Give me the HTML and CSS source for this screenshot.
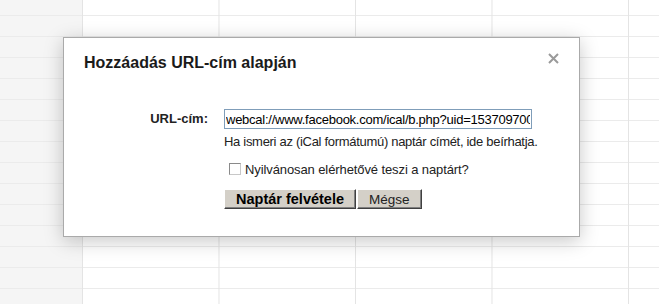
FILE: index.html
```html
<!DOCTYPE html>
<html lang="hu">

<head>
    <meta charset="UTF-8">
    <title>Hozzáadás URL-cím alapján</title>
    <link rel="stylesheet" href="styles.css">
</head>

<body>
    <div class="calendar"></div>

    <div class="dialog">
        <button class="close" title="Bezárás">
            <svg width="11" height="11" viewBox="0 0 11 11">
                <path d="M1 1L10 10M10 1L1 10" stroke="#9a9a9a" stroke-width="2" />
            </svg>
        </button>
        <h1 class="title">Hozzáadás URL-cím alapján</h1>

        <div class="form">
            <label class="label" for="url">URL-cím:</label>
            <div class="field">
                <input id="url" class="url-input" type="text"
                    value="webcal://www.facebook.com/ical/b.php?uid=153709700000&amp;key=abcdef">
                <p class="hint">Ha ismeri az (iCal formátumú) naptár címét, ide beírhatja.</p>
                <label class="public">
                    <input type="checkbox" class="check">
                    Nyilvánosan elérhetővé teszi a naptárt?
                </label>
                <div class="buttons">
                    <button class="btn btn-primary">Naptár felvétele</button>
                    <button class="btn">Mégse</button>
                </div>
            </div>
        </div>
    </div>
</body>

</html>
```

FILE: styles.css
```css
body {
    margin: 0;
    font-family: "Liberation Sans", Arial, sans-serif;
    color: #000;
    background: #fff;
}

/* calendar grid behind the dialog */
.calendar {
    height: 304px;
    background-color: #fff;
    background-image:
        linear-gradient(to right, #e4e4e4 1px, transparent 1px),
        linear-gradient(to bottom, #ebebeb 1px, transparent 1px),
        linear-gradient(to right, #f5f5f5 82px, transparent 82px);
    background-size: 136.5px 100%, 100% 21px, 100% 100%;
    background-position: 82px 0, 0 15px, 0 0;
    background-repeat: repeat-x, repeat-y, no-repeat;
}

.dialog {
    position: absolute;
    left: 63px;
    top: 37px;
    width: 517px;
    height: 200px;
    background: #fff;
    border: 1px solid #aaa;
    box-shadow: 0 4px 18px rgba(0, 0, 0, 0.22);
    padding: 15px 0 0 20px;
    box-sizing: border-box;
}

.close {
    position: absolute;
    top: 15px;
    right: 20px;
    padding: 0;
    border: none;
    background: none;
    cursor: pointer;
    line-height: 0;
}

.title {
    margin: 0;
    font-size: 16px;
    line-height: 19px;
    font-weight: bold;
    color: #1a1a1a;
}

.form {
    display: grid;
    grid-template-columns: 124px auto;
    column-gap: 16px;
    margin-top: 37px;
}

.label {
    text-align: right;
    font-size: 13px;
    font-weight: bold;
    line-height: 20px;
    color: #222;
}

.url-input {
    display: block;
    width: 308px;
    height: 20px;
    box-sizing: border-box;
    margin: 0;
    padding: 0 1px;
    border: 1px solid #7f9db9;
    font-family: "Liberation Sans", Arial, sans-serif;
    font-size: 13px;
    letter-spacing: -0.25px;
    color: #000;
    outline: none;
}

.hint {
    margin: 5px 0 0;
    font-size: 13px;
    letter-spacing: -0.3px;
    line-height: 15px;
    color: #222;
}

.public {
    display: flex;
    align-items: center;
    margin-top: 12px;
    height: 16px;
    font-size: 13px;
    letter-spacing: -0.1px;
    color: #222;
}

.check {
    appearance: none;
    width: 12px;
    height: 12px;
    margin: 0 4px 0 5px;
    border: 1px solid #8a8a8a;
    border-right-color: #c8c8c8;
    border-bottom-color: #c8c8c8;
    background: #fff;
}

.buttons {
    display: flex;
    gap: 1px;
    margin-top: 12px;
}

.btn {
    height: 20px;
    padding: 0 11px;
    font-family: "Liberation Sans", Arial, sans-serif;
    font-size: 13.5px;
    color: #222;
    background: #d4d0c8;
    border: 1px solid;
    border-color: #fff #404040 #404040 #fff;
    box-shadow: inset -1px -1px 0 #808080;
    cursor: pointer;
}

.btn-primary {
    width: 132px;
    padding: 0;
    font-size: 14.5px;
    font-weight: bold;
    color: #000;
}
```
